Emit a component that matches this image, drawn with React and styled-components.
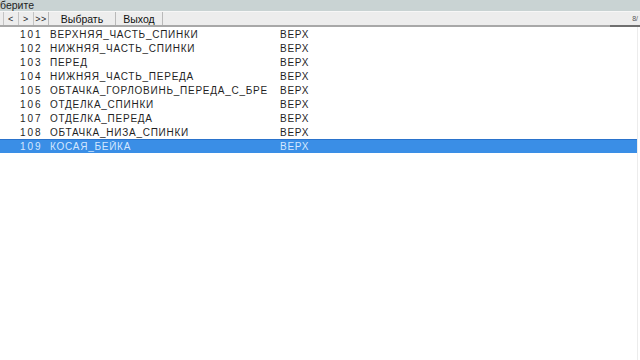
import React from 'react';
import styled, { createGlobalStyle } from 'styled-components';

const GlobalStyle = createGlobalStyle`
  html, body {
    margin: 0;
    padding: 0;
    background: #ffffff;
  }
  body {
    font-family: "Liberation Sans", Arial, sans-serif;
  }
`;

const rows = [
  { id: 101, name: 'ВЕРХНЯЯ_ЧАСТЬ_СПИНКИ', side: 'ВЕРХ' },
  { id: 102, name: 'НИЖНЯЯ_ЧАСТЬ_СПИНКИ', side: 'ВЕРХ' },
  { id: 103, name: 'ПЕРЕД', side: 'ВЕРХ' },
  { id: 104, name: 'НИЖНЯЯ_ЧАСТЬ_ПЕРЕДА', side: 'ВЕРХ' },
  { id: 105, name: 'ОБТАЧКА_ГОРЛОВИНЬ_ПЕРЕДА_С_БРЕ', side: 'ВЕРХ' },
  { id: 106, name: 'ОТДЕЛКА_СПИНКИ', side: 'ВЕРХ' },
  { id: 107, name: 'ОТДЕЛКА_ПЕРЕДА', side: 'ВЕРХ' },
  { id: 108, name: 'ОБТАЧКА_НИЗА_СПИНКИ', side: 'ВЕРХ' },
  { id: 109, name: 'КОСАЯ_БЕЙКА', side: 'ВЕРХ' },
];

export default function App() {
  const [selected, setSelected] = React.useState(109);

  return (
    <>
      <GlobalStyle />
      <Window>
        <TitleBar>берите</TitleBar>
        <Toolbar>
          <Buttons>
            <NavButton>&lt;</NavButton>
            <NavButton>&gt;</NavButton>
            <NavButton>&gt;&gt;</NavButton>
            <ActionButton width={66}>Выбрать</ActionButton>
            <ActionButton width={46}>Выход</ActionButton>
          </Buttons>
          <Counter>8/</Counter>
        </Toolbar>
        <List>
          {rows.map(item => (
            <Row
              key={item.id}
              $active={item.id === selected}
              onClick={() => setSelected(item.id)}
            >
              <Num>{item.id}</Num>
              <Name>{item.name}</Name>
              <Side>{item.side}</Side>
            </Row>
          ))}
        </List>
      </Window>
    </>
  );
}

const Window = styled.div`
  width: 640px;
  height: 360px;
  display: flex;
  flex-direction: column;
  overflow: hidden;
  background: #ffffff;
`;

const TitleBar = styled.div`
  height: 11px;
  background: #c9d3d3;
  color: #1e1e1e;
  font-size: 10.5px;
  line-height: 10px;
  white-space: nowrap;
`;

const Toolbar = styled.div`
  height: 13px;
  display: flex;
  align-items: stretch;
  justify-content: space-between;
  background: #ededed;
  border-top: 1px solid #f7f7f7;
  border-bottom: 2px solid #a8a8a8;
`;

const Buttons = styled.div`
  display: flex;
  padding-left: 3px;
`;

const NavButton = styled.div`
  width: 14px;
  display: flex;
  align-items: center;
  justify-content: center;
  border-left: 1px solid #c4c4c4;
  font-size: 9px;
  color: #222;
  letter-spacing: 0.5px;
`;

const ActionButton = styled.div`
  width: ${p => p.width}px;
  display: flex;
  align-items: center;
  justify-content: center;
  border-left: 1px solid #b9b9b9;
  font-size: 10.5px;
  color: #111;
  &:last-child {
    border-right: 1px solid #b9b9b9;
  }
`;

const Counter = styled.div`
  width: 28px;
  display: flex;
  align-items: center;
  justify-content: flex-end;
  padding-right: 2px;
  font-size: 7px;
  color: #555;
  margin-bottom: -2px;
  border-bottom: 2px solid #6f6f6f;
`;

const List = styled.div`
  flex: 1;
  border-right: 1px solid #ececec;
  margin-right: 2px;
`;

const Row = styled.div`
  height: 14px;
  display: flex;
  align-items: center;
  box-sizing: border-box;
  font-size: 10px;
  letter-spacing: 0.75px;
  color: ${p => (p.$active ? '#d4e8ff' : '#1f1f1f')};
  background: ${p => (p.$active ? '#3a8ee6' : 'transparent')};
  border-top: 1px solid ${p => (p.$active ? '#2a73cc' : 'transparent')};
  cursor: default;
`;

const Num = styled.span`
  width: 48px;
  padding-left: 20px;
  letter-spacing: 2px;
  box-sizing: border-box;
`;

const Name = styled.span`
  width: 224px;
  margin-left: 2px;
  white-space: nowrap;
  overflow: hidden;
`;

const Side = styled.span`
  margin-left: 6px;
`;
